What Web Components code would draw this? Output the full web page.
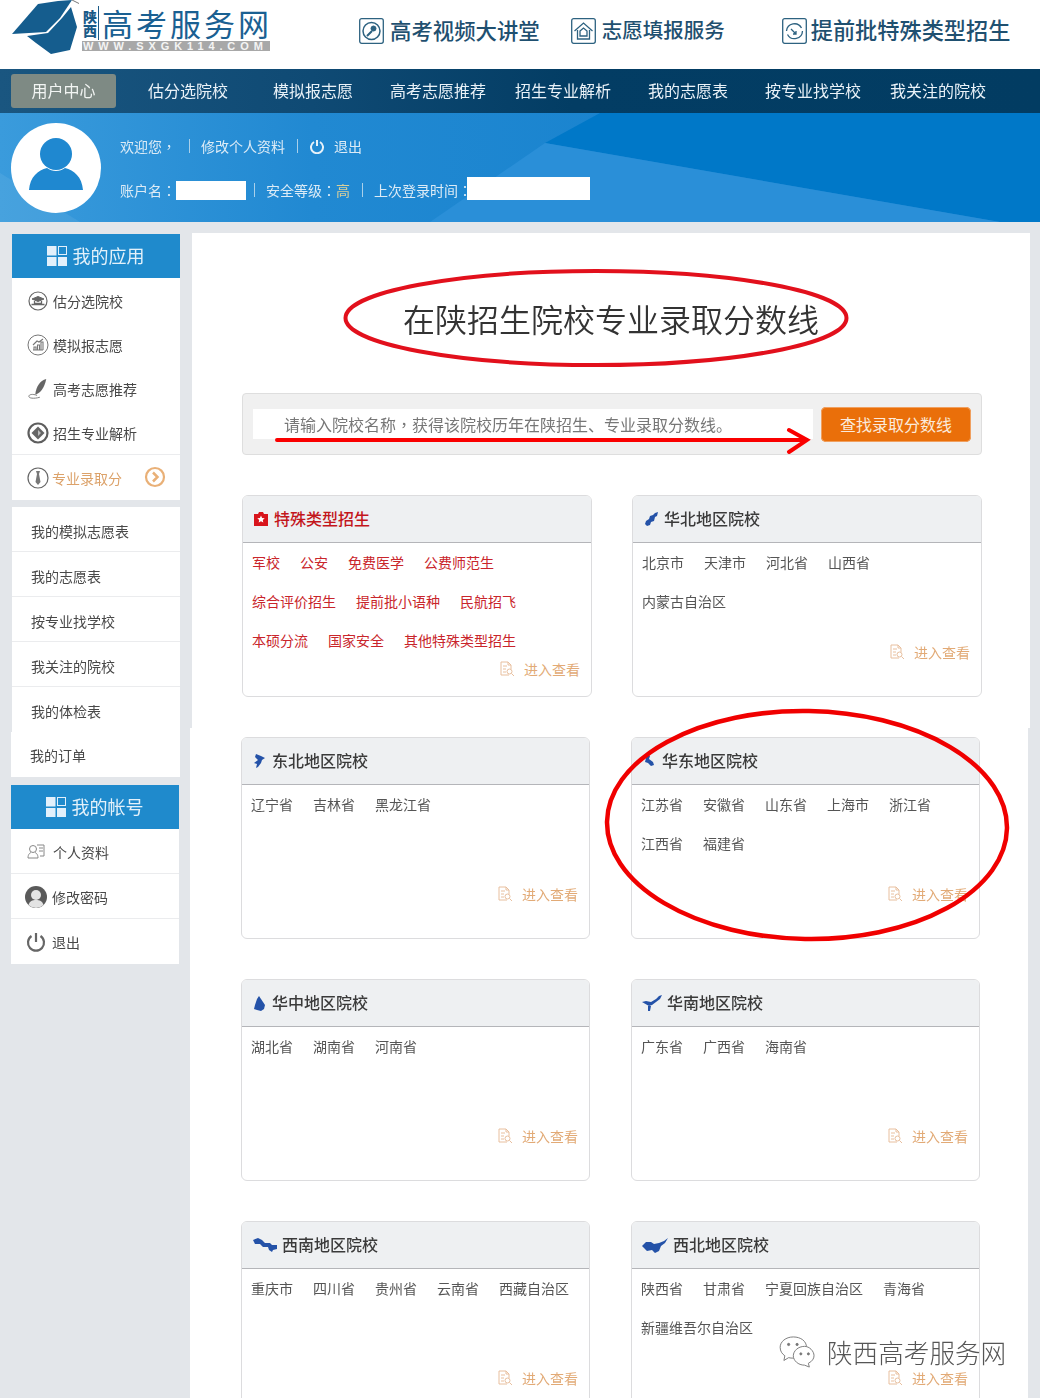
<!DOCTYPE html>
<html lang="zh-CN"><head><meta charset="utf-8"><title>在陕招生院校专业录取分数线</title>
<style>
html,body{margin:0;padding:0;background:#e3e6ea}
body{font-family:"Noto Sans CJK SC","Liberation Sans",sans-serif;color:#444}
svg{display:block}
</style></head><body>
<app-page>
  <site-header></site-header>
  <main-nav></main-nav>
  <user-banner></user-banner>
  <page-body>
    <side-bar slot="side"></side-bar>
    <main-top slot="main">
      <region-card style="--link:#c9252b;--title:#c3161c" name="特殊类型招生" text-left="31"><svg slot="icon" width="16" height="16" viewBox="0 0 16 16"><path d="M1 3h4l1-2h4l1 2h4v12H1z" fill="#d8141c"/><path d="M8 4.6l1.1 2.4 2.6.3-1.9 1.7.5 2.6L8 10.300l-2.300 1.300.5-2.600-1.900-1.700 2.600-.3z" fill="#fff"/></svg>
        <span>军校</span><span>公安</span><span>免费医学</span><span>公费师范生</span><span>综合评价招生</span><span>提前批小语种</span><span>民航招飞</span><span>本硕分流</span><span>国家安全</span><span>其他特殊类型招生</span></region-card>
      <region-card name="华北地区院校" text-left="31"><svg slot="icon" width="16" height="16" viewBox="0 0 16 16"><path d="M15 1l-3 1-2 2-3 1-1 3-3 2-1 3 2 2 3-1 1-3 3-1 1-4 2-1z" fill="#2452a8"/></svg>
        <span>北京市</span><span>天津市</span><span>河北省</span><span>山西省</span><span>内蒙古自治区</span></region-card>
    </main-top>
    <main-bottom slot="main">
      <region-card lower name="东北地区院校" text-left="30"><svg slot="icon" width="14" height="16" viewBox="0 0 14 16" style="margin-left:1px"><path d="M3 1l5 2 4 2-3 2-1 3-3 4-2 1 1-4-3-1 4-3-3-3z" fill="#2452a8"/></svg>
        <span>辽宁省</span><span>吉林省</span><span>黑龙江省</span></region-card>
      <region-card lower name="华东地区院校" text-left="30"><svg slot="icon" width="14" height="16" viewBox="0 0 14 16"><path d="M5 1l3 2-1 3 4 3 1 3-3 1-3-3-3-1 1-4z" fill="#2452a8"/></svg>
        <span>江苏省</span><span>安徽省</span><span>山东省</span><span>上海市</span><span>浙江省</span><span>江西省</span><span>福建省</span></region-card>
      <region-card lower name="华中地区院校" text-left="30"><svg slot="icon" width="14" height="17" viewBox="0 0 14 17"><path d="M7 1l2 3 2 3 2 3-1 4-3 2-4-1-3-1 1-4 1-3 1-3z" fill="#2452a8"/></svg>
        <span>湖北省</span><span>湖南省</span><span>河南省</span></region-card>
      <region-card lower name="华南地区院校" text-left="35"><svg slot="icon" width="20" height="16" viewBox="0 0 20 16"><path d="M20 0l-2 4-4 3-4 3-3 1-7-4 4-1 5 1 5-3 3-3zM6 11l3 0-1 5-2 0z" fill="#2452a8"/></svg>
        <span>广东省</span><span>广西省</span><span>海南省</span></region-card>
      <region-card lower name="西南地区院校" text-left="40"><svg slot="icon" width="26" height="14" viewBox="0 0 26 14"><path d="M1 2l5-2 4 2 3 3 5 0 2 2 5 0 0 4-4 1-1 2-3-2-1-3-5 0-3-3-5 0z" fill="#2452a8"/></svg>
        <span>重庆市</span><span>四川省</span><span>贵州省</span><span>云南省</span><span>西藏自治区</span></region-card>
      <region-card lower name="西北地区院校" text-left="41"><svg slot="icon" width="27" height="15" viewBox="0 0 27 15"><path d="M0 8l4-4 5 0 3 2 5-1 5-2 4-3-3 5-4 3-2 5-4 2-3-3-5 1-3-3z" fill="#2452a8"/></svg>
        <span>陕西省</span><span>甘肃省</span><span>宁夏回族自治区</span><span>青海省</span><span>新疆维吾尔自治区</span></region-card>
    </main-bottom>
  </page-body>
  <red-marks></red-marks>
  <water-mark></water-mark>
</app-page>
<script>
function def(name, html, init){
  customElements.define(name, class extends HTMLElement{
    constructor(){super();this.attachShadow({mode:'open'}).innerHTML=typeof html==='function'?'':html;}
    connectedCallback(){
      if(typeof html==='function'&&!this._r){this._r=1;this.shadowRoot.innerHTML=html(this);}
      if(init)init(this);
    }
  });
}
const FONT='"Noto Sans CJK SC","Liberation Sans",sans-serif';
const PUNCT=c=>`<span lang="zh-Hant" style="font-family:'Noto Sans CJK TC',sans-serif">${c}</span>`;

def('app-page',`<style>:host{display:block;position:relative;width:1040px;height:1398px;overflow:hidden;background:#e3e6ea;font-family:${FONT}}
.c{filter:blur(.35px);height:100%}</style><div class="c"><slot></slot></div>`);

def('site-header',`<style>
:host{display:flex;height:69px;background:#fff;align-items:flex-start;overflow:hidden}
.logo{display:flex;margin-left:12px;width:270px;flex:none}
.right{display:flex;flex:1;align-items:center;height:62px}
.brand{margin-left:3px;display:flex;flex-direction:column;width:188px;padding-top:4px}
.top{display:flex;height:37px;align-items:center}
.sx{writing-mode:vertical-rl;font-size:14px;line-height:16px;font-weight:900;color:#1a5a88;width:16px;height:30px;border-right:1px solid #1a5a88;margin-right:3px;text-orientation:upright;padding-top:4px}
.big{font-size:31px;letter-spacing:3px;line-height:37px;font-weight:400;color:#1a6092;white-space:nowrap}
.url{background:#a8a8a8;color:#f4f4f4;font:700 11px/10px "Liberation Sans",sans-serif;letter-spacing:4.900px;white-space:nowrap;padding-left:1px;height:10px}
.lk{display:flex;align-items:center;gap:6px;color:#1f5070;font-weight:500;white-space:nowrap}
.lk svg{flex:none}
.lk span{margin-bottom:4px}
</style>
<div class="logo"><svg width="67" height="55" viewBox="0 0 67 55"><path d="M0 34L26 4 46 1 60 0 48 18 34 32z" fill="#155d8e"/><path d="M15 36l21-3L50 18l9-11 6 20-7 23-19 4-15-11z" fill="#155d8e"/><path d="M60 0l12 6" stroke="#777" stroke-width="1"/></svg>
<div class="brand"><div class="top"><span class="sx">陕西</span><span class="big">高考服务网</span></div><div class="url">WWW.SXGK114.COM</div></div></div>
<div class="right">
<div class="lk" style="margin-left:77px;font-size:21.4px"><svg width="25" height="26" viewBox="0 0 25 26" fill="none" stroke="#2d6280"><rect x=".7" y=".7" width="23.600" height="24.600" rx="2" stroke-width="1.300"/><circle cx="12.500" cy="13" r="8.500" stroke-width="1.500"/><path d="M13 9l3 3M8 18l5-5" stroke-width="2"/><circle cx="14.500" cy="10.500" r="2.500" fill="#2d6280"/></svg><span>高考视频大讲堂</span></div>
<div class="lk" style="margin-left:31px;font-size:20.500px"><svg width="25" height="26" viewBox="0 0 25 26" fill="none" stroke="#2d6280" stroke-width="1.300"><rect x=".7" y=".7" width="23.600" height="24.600" rx="2"/><path d="M3.500 13L12.500 5l9 8M6.500 12v9h12v-9M9 13l3.500-3 3.500 3v5H9z"/></svg><span>志愿填报服务</span></div>
<div class="lk" style="margin-left:57px;font-size:22.200px;gap:4px"><svg width="25" height="26" viewBox="0 0 25 26" fill="none" stroke="#2d6280" stroke-width="1.300"><rect x=".7" y=".7" width="23.600" height="24.600" rx="2"/><path d="M4.500 13a8 8 0 0 1 15-3M20.500 13a8 8 0 0 1-15 3.500M9 11l5 5M14 13v3h-3"/></svg><span>提前批特殊类型招生</span></div>
</div>`);

def('main-nav',()=>{
  const items=[['估分选院校',32],['模拟报志愿',45],['高考志愿推荐',37],['招生专业解析',29],['我的志愿表',37],['按专业找学校',37],['我关注的院校',29]];
  return `<style>:host{display:flex;height:44px;align-items:center;background:linear-gradient(90deg,#1a5680 0,#0f4a74 30%,#033d64 55%,#023c62 100%);color:#eaf2f8;font-size:16px;white-space:nowrap}
.on{margin-left:11px;width:105px;height:34px;line-height:33px;text-align:center;background:#7e8a84;border-radius:3px;color:#f2f5f3}
span{line-height:40px;margin-bottom:2px}</style><div class="on">用户中心</div>`+items.map(i=>`<span style="margin-left:${i[1]}px">${i[0]}</span>`).join('');
});

def('user-banner',`<style>
:host{display:block;position:relative;height:109px;background:#0a7bc9;color:#dcebf6;font-size:14px;overflow:hidden}
.bg{position:absolute;inset:0}
.row{position:relative;display:flex;align-items:center;white-space:nowrap;height:24px}
.wrap{position:relative;display:flex;height:100%}
.av{width:90px;height:90px;margin:10px 19px 0 11px;flex:none;background:#fff;border-radius:50%}
.sep{width:1px;height:14px;background:#a9d0ea}
.box{background:#fff;flex:none}
.t{padding-top:21px}
</style>
<svg class="bg" width="1040" height="109" viewBox="0 0 1040 109"><defs><linearGradient id="g" x1="0" x2="1"><stop offset="0" stop-color="#3a9bdc"/><stop offset=".3" stop-color="#2189d2"/><stop offset=".6" stop-color="#1a84cf"/><stop offset="1" stop-color="#1a84cf"/></linearGradient></defs><rect width="1040" height="109" fill="url(#g)"/>
<path d="M545 30L600 0H1040V109H1000z" fill="#0078c8"/><path d="M545 30L1000 109H430z" fill="#2a8fd8"/><path d="M0 60L80 109H0z" fill="#fff" opacity=".07"/></svg>
<div class="wrap"><div class="av"><svg width="90" height="90" viewBox="0 0 90 90"><circle cx="45" cy="31" r="16" fill="#1f88d0"/><path d="M18 67c1-13 9-20 18-22 5 4 13 4 18 0 9 2 17 9 18 22z" fill="#1f88d0"/></svg></div>
<div class="t"><div class="row" style="height:24px"><span>欢迎您${PUNCT('，')}</span><span class="sep" style="margin:0 11px 0 13px"></span><span>修改个人资料</span><span class="sep" style="margin:0 12px 0 12px"></span><svg width="14" height="15" viewBox="0 0 14 15" fill="none" stroke="#e6f1f9" stroke-width="2"><path d="M4 3a6 6 0 1 0 6 0M7 1v6"/></svg><span style="margin-left:10px">退出</span></div>
<div class="row" style="margin-top:20px"><span>账户名${PUNCT('：')}</span><span class="box" style="width:70px;height:19px;margin-left:0"></span><span class="sep" style="margin:0 11px 0 8px"></span><span>安全等级${PUNCT('：')}</span><span style="color:#d8cf9b">高</span><span class="sep" style="margin:0 11px 0 12px"></span><span>上次登录时间${PUNCT('：')}</span><span class="box" style="width:123px;height:23px;margin:-4px 0 0 -5px"></span></div></div></div>`);

def('page-body',`<style>:host{display:grid;grid-template-columns:168px 1fr;column-gap:12px;padding:11px 0 0 12px;width:1028px;box-sizing:border-box}
.s{padding-top:1px}</style><div class="s"><slot name="side"></slot></div><div><slot name="main"></slot></div>`);

const ICONS={
 cap:`<svg width="20" height="20" viewBox="0 0 20 20" fill="none" stroke="#666"><circle cx="10" cy="10" r="9" stroke-width="1.200"/><path d="M4 8l6-2.500L16 8l-6 2.500z" fill="#666"/><path d="M6.500 10v2.500h7V10M3.500 13.500h13" stroke-width="1.300"/></svg>`,
 chart:`<svg width="22" height="22" viewBox="0 0 22 22" fill="none" stroke="#777"><circle cx="11" cy="11" r="10"/><path d="M6 16h10M7 16v-3h2v3M10.500 16v-5h2v5M14 16V8h2v8M6 11l4-4 2 1 4-3" stroke-width="1.100"/></svg>`,
 pen:`<svg width="24" height="24" viewBox="0 0 24 24"><path d="M21 1C14 3 10 9 9 18c5-1 10-7 12-17z" fill="#666"/><path d="M11 19C6 17 2 18 2 20c0 2 5 3 12 1" fill="none" stroke="#777"/></svg>`,
 dia:`<svg width="22" height="22" viewBox="0 0 22 22" fill="none"><circle cx="11" cy="11" r="9.500" stroke="#5e5e5e" stroke-width="2.200"/><path d="M11 4.500l6.500 6.500-6.500 6.500L4.500 11z" fill="#666"/><path d="M11 8l3 3-3 3" fill="#bbb"/></svg>`,
 tie:`<svg width="22" height="22" viewBox="0 0 22 22" fill="none" stroke="#666"><circle cx="11" cy="11" r="10" stroke-width="1.200"/><path d="M9 4h4l-1 3 1.500 8L11 18l-2.500-3L10 7z" fill="#777" stroke="none"/></svg>`,
 user:`<svg width="18" height="16" viewBox="0 0 18 16" fill="none" stroke="#888"><circle cx="6" cy="5" r="3.500"/><path d="M1 14c0-4 2-5 3-5.500M11 14c0-4-2-5-3-5.500M1 14h10M10 1h7v11h-4M12 4h4M12 7h4"/></svg>`,
 face:`<svg width="22" height="22" viewBox="0 0 22 22"><circle cx="11" cy="11" r="11" fill="#5a5a5a"/><circle cx="11" cy="9" r="5" fill="#e3e3e3"/><path d="M3.500 19c1-4 4-5 7.500-5s6.500 1 7.500 5a11 11 0 0 1-15 0z" fill="#e3e3e3"/></svg>`,
 off:`<svg width="20" height="20" viewBox="0 0 20 20" fill="none" stroke="#666" stroke-width="2.200"><path d="M5.500 4a8 8 0 1 0 9 0M10 1v9"/></svg>`
};

def('side-head',(h)=>`<style>:host{display:flex;height:44px;box-sizing:border-box;padding:0 1px 0 0;align-items:center;justify-content:center;gap:6px;background:#1f8acc;color:#e3f1fa;font-size:18px}
span{margin-bottom:3px}</style>
<svg width="20" height="20" viewBox="0 0 20 20"><rect width="9.500" height="9.500" fill="#e2f0fb"/><rect x="11.500" y=".5" width="8" height="8" fill="none" stroke="#e2f0fb"/><rect y="11" width="9.500" height="9" fill="#e2f0fb"/><rect x="11" y="11" width="9" height="9" fill="#e2f0fb"/></svg><span>${h.getAttribute('label')}</span>`);

def('side-item',(h)=>{
  const ic=h.getAttribute('icon'), x=h.getAttribute('x')||'15', g=h.getAttribute('gap')||'4';
  const ht=h.getAttribute('h')||'44', line=h.hasAttribute('line'), p=h.getAttribute('p')||'1';
  return `<style>:host{display:flex;align-items:center;height:${ht}px;box-sizing:border-box;padding:${p}px 0 0 ${x}px;background:#fff;color:#484848;font-size:14px;white-space:nowrap;${line?'border-bottom:1px solid #ebecee;':''}}
.i{flex:none;width:22px;display:flex;justify-content:center;margin-right:${g}px}</style>${ic?`<span class="i">${ICONS[ic]}</span>`:''}<slot></slot>`;
});

def('side-block',`<style>:host{display:block;margin-bottom:7px;background:#fff}</style><slot></slot>`);

def('side-bar',`<style>:host{display:block}</style>
<side-block>
<side-head label="我的应用"></side-head>
<side-item icon="cap">估分选院校</side-item><side-item icon="chart">模拟报志愿</side-item><side-item icon="pen">高考志愿推荐</side-item><side-item icon="dia" h="45" line p="1">招生专业解析</side-item>
<side-item icon="tie" h="45" p="0" style="color:#dca26a" gap="3">专业录取分<svg style="margin:-1px 0 0 22px" width="22" height="22" viewBox="0 0 22 22" fill="none" stroke="#e9b077" stroke-width="2.200"><circle cx="11" cy="11" r="9"/><path d="M9 6.500l4.500 4.500L9 15.500" stroke-width="2.500"/></svg></side-item>
</side-block>
<side-block style="margin-bottom:8px">
<side-item x="19" h="45" p="3" line>我的模拟志愿表</side-item><side-item x="19" h="45" p="3" line>我的志愿表</side-item><side-item x="19" h="45" p="3" line>按专业找学校</side-item><side-item x="19" h="45" p="3" line>我关注的院校</side-item><side-item x="19" h="45" p="3">我的体检表</side-item><side-item x="19" h="45" p="1" style="margin-left:-1px;margin-right:1px">我的订单</side-item>
</side-block>
<side-block style="margin-left:-1px;margin-right:1px">
<side-head label="我的帐号"></side-head>
<side-item icon="user" h="45" line x="14" gap="6">个人资料</side-item><side-item icon="face" h="45" line x="14" gap="5">修改密码</side-item><side-item icon="off" h="45" x="14" gap="5">退出</side-item>
</side-block>`);

def('main-top',`<style>:host{display:block;background:#fff;margin-right:-2px;padding:64px 0 31px 50px;box-sizing:border-box;height:495px}
h1{margin:0;font-size:32px;line-height:42px;font-weight:350;color:#333;padding-left:161px;white-space:nowrap}
.grid{display:grid;grid-template-columns:350px 350px;column-gap:40px;margin-top:40px}
</style><h1>在陕招生院校专业录取分数线</h1><search-box></search-box><div class="grid"><slot></slot></div>`);

def('search-box',`<style>:host{display:flex;align-items:center;margin-top:54px;width:740px;height:62px;box-sizing:border-box;background:#f0f0f0;border:1px solid #dedede;border-radius:4px;padding-left:10px}
.in{width:560px;height:30px;line-height:30px;background:#fff;color:#777;font-size:16px;padding-left:31px;box-sizing:border-box;white-space:nowrap;overflow:hidden}
.b{margin-left:8px;width:150px;height:35px;line-height:34px;text-align:center;background:#ea6f0a;border-radius:5px;color:#fbeadb;font-size:16px;box-shadow:0 0 0 1px #f0a060 inset}
</style><div class="in">请输入院校名称${PUNCT('，')}获得该院校历年在陕招生、专业录取分数线。</div><div class="b">查找录取分数线</div>`);

def('main-bottom',`<style>:host{display:grid;grid-template-columns:349px 349px;column-gap:41px;row-gap:40px;align-content:start;background:#fff;margin-left:-2px;padding:9px 0 0 51px;height:700px;width:838px;box-sizing:border-box}</style><slot></slot>`);

def('region-card',(h)=>`<style>
:host{display:block;height:202px;box-sizing:border-box;border:1px solid #dcdcde;border-radius:6px;background:#fff;overflow:hidden}
.hd{display:flex;align-items:center;height:46px;background:#eef0f2;border-bottom:1px solid #b4b5b9;padding-left:10px;font-size:16px;font-weight:500;color:var(--title,#3a3a3a);white-space:nowrap}
.nm{margin-bottom:3px}
.ic{width:${(+h.getAttribute('text-left'))-10}px;flex:none;display:block}
.links{display:flex;flex-wrap:wrap;column-gap:20px;align-content:flex-start;padding:0 9px;min-height:100px;box-sizing:border-box;color:var(--link,#555);font-size:14px}
::slotted(span){display:block;line-height:39px;white-space:nowrap}
.ft{display:flex;justify-content:flex-end;align-items:center;height:18px;padding-right:11px;color:#e2aa76;font-size:14px;white-space:nowrap}
.ft svg{margin-right:8px}
</style><div class="hd"><span class="ic"><slot name="icon"></slot></span><span class="nm">${h.getAttribute('name')}</span></div>
<div class="links"><slot></slot></div>
<div class="ft"><svg width="17" height="16" viewBox="0 0 17 16" fill="none" stroke="#e8bf9e"><path d="M10 14H2V1h7l3 3v4M9 1v3h3M4 5h4M4 8h3M4 11h3"/><circle cx="10.500" cy="10.500" r="2.500"/><path d="M12.500 12.500l2.500 2.500"/></svg>进入查看</div>`);

def('red-marks',`<style>:host{position:absolute;left:0;top:0;pointer-events:none}</style>
<svg width="1040" height="1398" viewBox="0 0 1040 1398" fill="none">
<ellipse cx="596" cy="318" rx="250.500" ry="47" stroke="#e2101c" stroke-width="4"/>
<ellipse cx="807" cy="825" rx="200" ry="114" stroke="#f00000" stroke-width="4.500" transform="rotate(1 807 825)"/>
<path d="M277 440H805M789 430l18 10-18 12" stroke="#fa0000" stroke-width="4" stroke-linecap="round" stroke-linejoin="miter"/>
</svg>`);

def('water-mark',`<style>:host{position:absolute;left:778px;top:1335px;display:flex;align-items:center;gap:8px;color:#555;font-size:25.600px;line-height:34px;font-weight:300;white-space:nowrap}</style>
<svg width="41" height="32" viewBox="0 0 41 34" fill="#fff" stroke="#777"><path d="M15 1C7 1 1 6 1 12c0 4 2 7 5 9l-1 5 5-3c2 .5 3 .5 5 .5 8 0 14-5 14-11.500S23 1 15 1z"/><path d="M27 11c-7 0-12 5-12 10s5 10 12 10l5 2-1-4c4-2 6-5 6-8 0-5-5-10-10-10z"/><circle cx="10" cy="9" r="1.200" fill="#777"/><circle cx="19" cy="9" r="1.200" fill="#777"/><circle cx="23" cy="19" r="1.100" fill="#777"/><circle cx="31" cy="19" r="1.100" fill="#777"/></svg>陕西高考服务网`);
</script>
</body></html>
